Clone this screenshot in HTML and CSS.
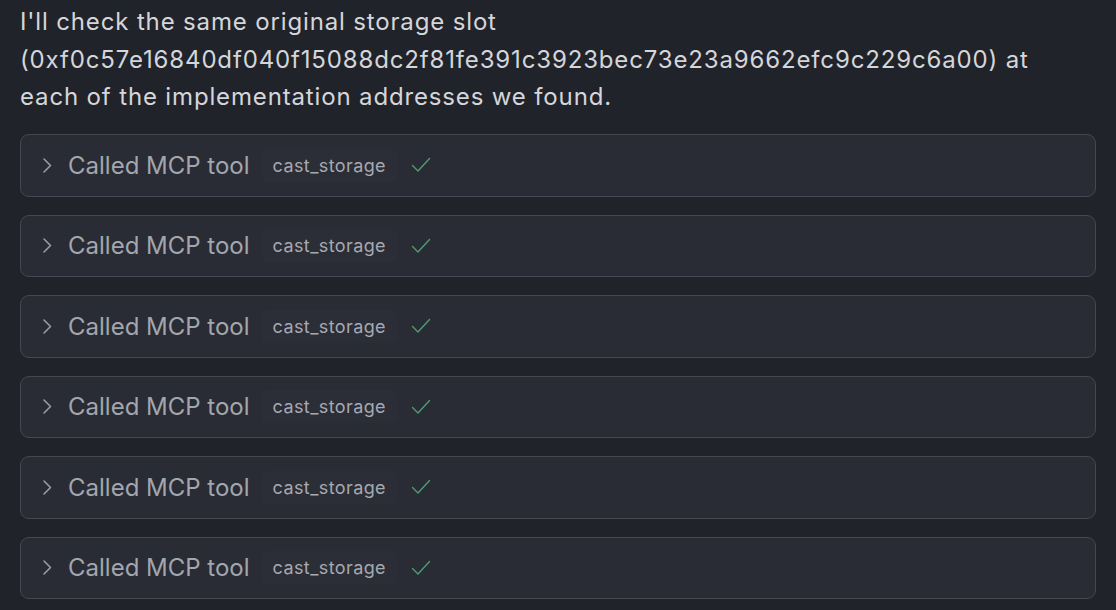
FILE: index.html
```html
<!DOCTYPE html>
<html>
<head>
<meta charset="utf-8">
<link rel="stylesheet" href="styles.css">
</head>
<body>
<div class="page">
  <p class="intro">I'll check the same original storage slot (0xf0c57e16840df040f15088dc2f81fe391c3923bec73e23a9662efc9c229c6a00) at each of the implementation addresses we found.</p>
  <div class="list">
    <div class="card"><svg class="chev" viewBox="0 0 10 16"><path d="M2 1.5 L8.5 8 L2 14.5" fill="none" stroke="currentColor" stroke-width="1.5" stroke-linecap="round" stroke-linejoin="round"/></svg><span class="label">Called MCP tool</span><span class="chip">cast_storage</span><svg class="check" viewBox="0 0 20 16"><path d="M1.5 8.5 L7 14 L18.5 1.5" fill="none" stroke="currentColor" stroke-width="1.4" stroke-linecap="round" stroke-linejoin="round"/></svg></div>
    <div class="card"><svg class="chev" viewBox="0 0 10 16"><path d="M2 1.5 L8.5 8 L2 14.5" fill="none" stroke="currentColor" stroke-width="1.5" stroke-linecap="round" stroke-linejoin="round"/></svg><span class="label">Called MCP tool</span><span class="chip">cast_storage</span><svg class="check" viewBox="0 0 20 16"><path d="M1.5 8.5 L7 14 L18.5 1.5" fill="none" stroke="currentColor" stroke-width="1.4" stroke-linecap="round" stroke-linejoin="round"/></svg></div>
    <div class="card"><svg class="chev" viewBox="0 0 10 16"><path d="M2 1.5 L8.5 8 L2 14.5" fill="none" stroke="currentColor" stroke-width="1.5" stroke-linecap="round" stroke-linejoin="round"/></svg><span class="label">Called MCP tool</span><span class="chip">cast_storage</span><svg class="check" viewBox="0 0 20 16"><path d="M1.5 8.5 L7 14 L18.5 1.5" fill="none" stroke="currentColor" stroke-width="1.4" stroke-linecap="round" stroke-linejoin="round"/></svg></div>
    <div class="card"><svg class="chev" viewBox="0 0 10 16"><path d="M2 1.5 L8.5 8 L2 14.5" fill="none" stroke="currentColor" stroke-width="1.5" stroke-linecap="round" stroke-linejoin="round"/></svg><span class="label">Called MCP tool</span><span class="chip">cast_storage</span><svg class="check" viewBox="0 0 20 16"><path d="M1.5 8.5 L7 14 L18.5 1.5" fill="none" stroke="currentColor" stroke-width="1.4" stroke-linecap="round" stroke-linejoin="round"/></svg></div>
    <div class="card"><svg class="chev" viewBox="0 0 10 16"><path d="M2 1.5 L8.5 8 L2 14.5" fill="none" stroke="currentColor" stroke-width="1.5" stroke-linecap="round" stroke-linejoin="round"/></svg><span class="label">Called MCP tool</span><span class="chip">cast_storage</span><svg class="check" viewBox="0 0 20 16"><path d="M1.5 8.5 L7 14 L18.5 1.5" fill="none" stroke="currentColor" stroke-width="1.4" stroke-linecap="round" stroke-linejoin="round"/></svg></div>
    <div class="card"><svg class="chev" viewBox="0 0 10 16"><path d="M2 1.5 L8.5 8 L2 14.5" fill="none" stroke="currentColor" stroke-width="1.5" stroke-linecap="round" stroke-linejoin="round"/></svg><span class="label">Called MCP tool</span><span class="chip">cast_storage</span><svg class="check" viewBox="0 0 20 16"><path d="M1.5 8.5 L7 14 L18.5 1.5" fill="none" stroke="currentColor" stroke-width="1.4" stroke-linecap="round" stroke-linejoin="round"/></svg></div>
  </div>
</div>
</body>
</html>
```

FILE: styles.css
```css
html, body {
  margin: 0;
  padding: 0;
  background: #21232b;
  overflow: hidden;
}
.page {
  padding: 3px 20px 0 20px;
  width: 1076px;
  font-family: Inter, "Noto Sans", sans-serif;
}
.intro {
  margin: 0;
  padding-right: 30px;
  color: #d5d6d9;
  font-size: 24px;
  line-height: 37.5px;
  letter-spacing: 0.85px;
}
.list {
  margin-top: 18.5px;
  display: flex;
  flex-direction: column;
  gap: 18px;
}
.card {
  box-sizing: border-box;
  height: 62.5px;
  border: 1.5px solid #454852;
  border-radius: 9px;
  background: #292c35;
  display: flex;
  align-items: center;
  padding-left: 21px;
}
.chev {
  width: 10px;
  height: 17px;
  color: #9b9ea4;
  flex: none;
}
.label {
  margin-left: 16px;
  color: #a3a6ac;
  font-size: 24px;
}
.chip {
  margin-left: 12px;
  padding: 6px 11px;
  border-radius: 5px;
  background: #2b2e37;
  color: #a6a9af;
  font-size: 18px;
  letter-spacing: 0.4px;
}
.check {
  margin-left: 14px;
  width: 20px;
  height: 16px;
  color: #4f9c6c;
  flex: none;
}
```
